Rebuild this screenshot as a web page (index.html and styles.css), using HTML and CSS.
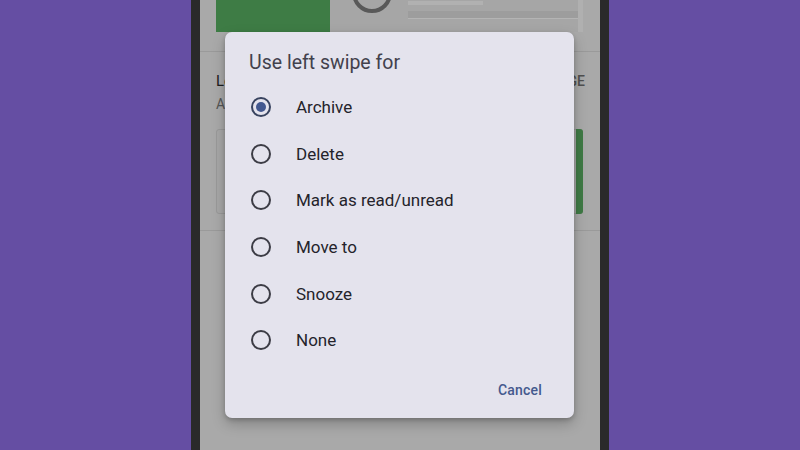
FILE: index.html
```html
<!DOCTYPE html>
<html lang="en">
<head>
<meta charset="utf-8">
<title>Swipe settings</title>
<link rel="stylesheet" href="styles.css">
</head>
<body>
<div class="phone">
  <div class="screen">
    <div class="preview">
      <div class="preview-green"></div>
      <div class="preview-panel">
        <div class="ring"></div>
        <div class="lines">
          <div class="line-short"></div>
          <div class="line-long"></div>
        </div>
      </div>
    </div>
    <div class="divider first"></div>
    <div class="setting">
      <div class="setting-head">
        <span class="setting-title">Left swipe</span>
        <span class="setting-action">CHANGE</span>
      </div>
      <div class="setting-sub">Archive</div>
    </div>
    <div class="swipe-card">
      <div class="swipe-card-body"></div>
      <div class="swipe-card-bar"></div>
    </div>
    <div class="divider second"></div>

    <div class="dialog">
      <div class="dialog-title">Use left swipe for</div>
      <ul class="options">
        <li class="option"><span class="radio checked"></span><span class="label">Archive</span></li>
        <li class="option"><span class="radio"></span><span class="label">Delete</span></li>
        <li class="option"><span class="radio"></span><span class="label">Mark as read/unread</span></li>
        <li class="option"><span class="radio"></span><span class="label">Move to</span></li>
        <li class="option"><span class="radio"></span><span class="label">Snooze</span></li>
        <li class="option"><span class="radio"></span><span class="label">None</span></li>
      </ul>
      <div class="actions">
        <span class="cancel">Cancel</span>
      </div>
    </div>
  </div>
</div>
</body>
</html>
```
FILE: styles.css
```css
* { box-sizing: border-box; }
html, body { margin: 0; padding: 0; }
body {
  width: 800px;
  height: 450px;
  overflow: hidden;
  background: #654ea3;
  display: flex;
  justify-content: center;
  font-family: Roboto, "Noto Sans", Arial, sans-serif;
}
.phone {
  width: 418px;
  height: 450px;
  background: #2a2a2a;
  padding: 0 9px;
}
.screen {
  position: relative;
  height: 100%;
  background: #a9a9a9;
  overflow: hidden;
}
.preview {
  display: flex;
  height: 32px;
  margin: 0 17px 0 16px;
  background: #adadad;
}
.preview-green {
  width: 114px;
  background: #3e7c45;
}
.preview-panel {
  flex: 1;
  display: flex;
  background: #a6a6a6;
  border-right: 5px solid #b0b0b0;
}
.ring {
  width: 40px;
  height: 40px;
  margin: -27px 0 0 22px;
  border: 4px solid #595959;
  border-radius: 50%;
  flex: none;
}
.lines {
  flex: 1;
  margin-left: 16px;
  display: flex;
  flex-direction: column;
  gap: 6px;
  padding-top: 1px;
}
.line-short {
  width: 75px;
  height: 4px;
  background: #b1b1b1;
}
.line-long {
  height: 8px;
  background: #9d9d9d;
  border-bottom: 1px solid #b4b4b4;
}
.divider {
  height: 1px;
  background: #9a9a9a;
}
.divider.first { margin-top: 19px; }
.divider.second { margin-top: 16px; }
.setting {
  padding: 20px 15px 0 16px;
}
.setting-head {
  display: flex;
  justify-content: space-between;
  font-size: 15px;
  line-height: 18px;
  color: #1e1e1e;
}
.setting-action {
  color: #505050;
  font-size: 14px;
  font-weight: 500;
}
.setting-sub {
  margin-top: 5px;
  font-size: 14px;
  line-height: 18px;
  color: #555;
}
.swipe-card {
  display: flex;
  margin: 16px 17px 0 16px;
  height: 85px;
  border: 1px solid #999;
  border-radius: 3px;
  background: #a7a7a7;
}
.swipe-card-body { flex: 1; }
.swipe-card-bar {
  width: 7px;
  margin: -1px -1px -1px 0;
  background: #3f7a45;
  border-radius: 0 3px 3px 0;
}
.dialog {
  position: absolute;
  left: 25px;
  top: 32px;
  width: 349px;
  height: 386px;
  background: #e4e3ed;
  border-radius: 7px;
  box-shadow: 0 6px 14px rgba(0, 0, 0, 0.22), 0 2px 4px rgba(0, 0, 0, 0.18);
  padding: 19px 0 0 0;
}
.dialog-title {
  padding-left: 24px;
  font-size: 19.5px;
  line-height: 24px;
  color: #42414c;
}
.options {
  list-style: none;
  margin: 9px 0 0 0;
  padding: 0;
}
.option {
  display: flex;
  align-items: center;
  height: 46.6px;
  padding-left: 26px;
}
.radio {
  width: 20px;
  height: 20px;
  border: 2px solid #3c3c45;
  border-radius: 50%;
  display: flex;
  align-items: center;
  justify-content: center;
  flex: none;
}
.radio.checked {
  border-color: #38435f;
}
.radio.checked::after {
  content: "";
  width: 10px;
  height: 10px;
  border-radius: 50%;
  background: #43588f;
}
.label {
  margin-left: 25px;
  font-size: 17px;
  color: #24232b;
}
.actions {
  display: flex;
  justify-content: flex-end;
  padding: 16px 32px 0 0;
}
.cancel {
  font-size: 14px;
  font-weight: 500;
  letter-spacing: 0.2px;
  color: #44598e;
  line-height: 20px;
}
```
